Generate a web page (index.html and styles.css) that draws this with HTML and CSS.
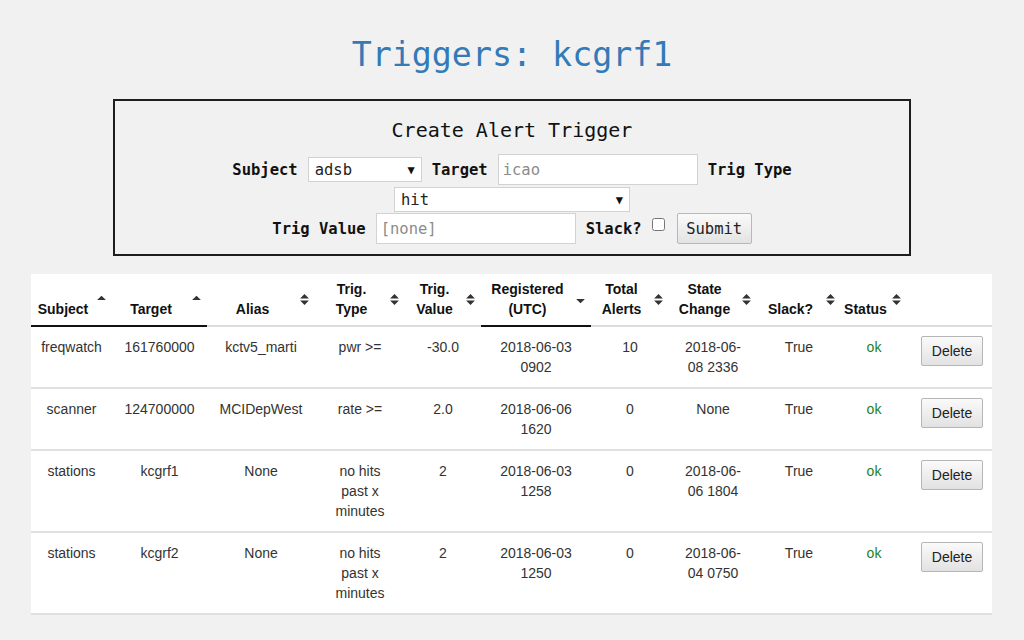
FILE: index.html
```html
<!DOCTYPE html>
<html lang="en">
<head>
<meta charset="utf-8">
<title>Triggers: kcgrf1</title>
<link rel="stylesheet" href="styles.css">
</head>
<body>
<h1 class="page-title">Triggers: kcgrf1</h1>

<form class="create-box">
  <h2 class="create-title">Create Alert Trigger</h2>
  <div class="form-row">
    <label class="lbl">Subject</label>
    <span class="sel-wrap sel-subject"><select class="sel"><option>adsb</option></select></span>
    <label class="lbl">Target</label>
    <input class="txt" type="text" placeholder="icao">
    <label class="lbl">Trig Type</label>
  </div>
  <div class="form-row row-type">
    <span class="sel-wrap sel-type"><select class="sel"><option>hit</option></select></span>
  </div>
  <div class="form-row">
    <label class="lbl">Trig Value</label>
    <input class="txt" type="text" placeholder="[none]">
    <label class="lbl">Slack?</label>
    <input class="chk" type="checkbox">
    <button class="submit-btn" type="button">Submit</button>
  </div>
</form>

<table class="triggers">
  <colgroup>
    <col style="width:81px"><col style="width:95px"><col style="width:108px"><col style="width:90px">
    <col style="width:76px"><col style="width:110px"><col style="width:78px"><col style="width:88px">
    <col style="width:84px"><col style="width:66px"><col style="width:85px">
  </colgroup>
  <thead>
    <tr>
      <th class="sorted">Subject<svg class="sort-icon" viewBox="0 0 8 10"><path d="M0 5.5 L4 1.5 L8 5.5 Z"/></svg></th>
      <th class="sorted">Target<svg class="sort-icon" viewBox="0 0 8 10"><path d="M0 5.5 L4 1.5 L8 5.5 Z"/></svg></th>
      <th>Alias<svg class="sort-icon" viewBox="0 0 8 10"><path d="M0 4 L4 0 L8 4 Z M0 6 L8 6 L4 10 Z"/></svg></th>
      <th>Trig.<br>Type<svg class="sort-icon" viewBox="0 0 8 10"><path d="M0 4 L4 0 L8 4 Z M0 6 L8 6 L4 10 Z"/></svg></th>
      <th>Trig.<br>Value<svg class="sort-icon" viewBox="0 0 8 10"><path d="M0 4 L4 0 L8 4 Z M0 6 L8 6 L4 10 Z"/></svg></th>
      <th class="sorted">Registered<br>(UTC)<svg class="sort-icon" viewBox="0 0 8 10"><path d="M0 4.5 L8 4.5 L4 8.5 Z"/></svg></th>
      <th>Total<br>Alerts<svg class="sort-icon" viewBox="0 0 8 10"><path d="M0 4 L4 0 L8 4 Z M0 6 L8 6 L4 10 Z"/></svg></th>
      <th>State<br>Change<svg class="sort-icon" viewBox="0 0 8 10"><path d="M0 4 L4 0 L8 4 Z M0 6 L8 6 L4 10 Z"/></svg></th>
      <th>Slack?<svg class="sort-icon" viewBox="0 0 8 10"><path d="M0 4 L4 0 L8 4 Z M0 6 L8 6 L4 10 Z"/></svg></th>
      <th>Status<svg class="sort-icon" viewBox="0 0 8 10"><path d="M0 4 L4 0 L8 4 Z M0 6 L8 6 L4 10 Z"/></svg></th>
      <th class="no-sort"></th>
    </tr>
  </thead>
  <tbody>
    <tr>
      <td>freqwatch</td><td>161760000</td><td>kctv5_marti</td><td>pwr &gt;=</td><td>-30.0</td>
      <td>2018-06-03 0902</td><td>10</td><td>2018-06-08 2336</td><td>True</td><td class="ok">ok</td>
      <td class="act"><button class="del-btn" type="button">Delete</button></td>
    </tr>
    <tr>
      <td>scanner</td><td>124700000</td><td>MCIDepWest</td><td>rate &gt;=</td><td>2.0</td>
      <td>2018-06-06 1620</td><td>0</td><td>None</td><td>True</td><td class="ok">ok</td>
      <td class="act"><button class="del-btn" type="button">Delete</button></td>
    </tr>
    <tr>
      <td>stations</td><td>kcgrf1</td><td>None</td><td>no hits past x minutes</td><td>2</td>
      <td>2018-06-03 1258</td><td>0</td><td>2018-06-06 1804</td><td>True</td><td class="ok">ok</td>
      <td class="act"><button class="del-btn" type="button">Delete</button></td>
    </tr>
    <tr>
      <td>stations</td><td>kcgrf2</td><td>None</td><td>no hits past x minutes</td><td>2</td>
      <td>2018-06-03 1250</td><td>0</td><td>2018-06-04 0750</td><td>True</td><td class="ok">ok</td>
      <td class="act"><button class="del-btn" type="button">Delete</button></td>
    </tr>
  </tbody>
</table>
</body>
</html>
```

FILE: styles.css
```css
html, body {
  margin: 0;
  padding: 0;
  background: #f1f1f1;
}

body {
  font-family: "DejaVu Sans Mono", "Liberation Mono", monospace;
  color: #222;
}

.page-title {
  margin: 35px 0 24px;
  font-family: "DejaVu Sans Mono", monospace;
  font-size: 33.3px;
  line-height: 40px;
  font-weight: normal;
  color: #337ab7;
  text-align: center;
}

.create-box {
  box-sizing: border-box;
  width: 798px;
  margin: 0 auto;
  border: 2px solid #1e1e1e;
  padding: 17px 0 10px;
  display: flex;
  flex-direction: column;
  align-items: center;
}

.create-title {
  margin: 0 0 12px;
  font-size: 20px;
  line-height: 24px;
  font-weight: normal;
  color: #111;
}

.form-row {
  display: flex;
  align-items: center;
  justify-content: center;
  gap: 10px;
  height: 31px;
}

.row-type {
  height: 25px;
  margin: 2px 0 1px;
}

.lbl {
  font-size: 15.5px;
  font-weight: bold;
  color: #111;
}

.sel-wrap {
  position: relative;
  display: block;
}

.sel-wrap::after {
  content: "\25BC";
  position: absolute;
  right: 7px;
  top: 50%;
  transform: translateY(-50%);
  font-size: 12px;
  color: #111;
  pointer-events: none;
}

.sel {
  -webkit-appearance: none;
  appearance: none;
  box-sizing: border-box;
  display: block;
  height: 25px;
  margin: 0;
  padding: 0 6px;
  border: 1px solid #d2d2d2;
  border-radius: 0;
  background: #fff;
  font-family: "DejaVu Sans Mono", monospace;
  font-size: 15.5px;
  color: #222;
}

.sel-subject .sel { width: 114px; }
.sel-type .sel { width: 236px; }

.txt {
  box-sizing: border-box;
  width: 200px;
  height: 31px;
  margin: 0;
  padding: 0 4px;
  border: 1px solid #d2d2d2;
  background: #fff;
  font-family: "DejaVu Sans Mono", monospace;
  font-size: 15.5px;
  color: #222;
}

.txt::placeholder {
  color: #8c8c8c;
}

.chk {
  width: 13px;
  height: 13px;
  margin: 5px 2px 0 0;
  align-self: flex-start;
}

.submit-btn {
  box-sizing: border-box;
  width: 75px;
  height: 31px;
  margin: 0;
  padding: 0;
  border: 1px solid #b8b8b8;
  border-radius: 2px;
  background: linear-gradient(#fafafa, #e3e3e3);
  font-family: "DejaVu Sans Mono", monospace;
  font-size: 15.5px;
  color: #222;
}

.triggers {
  width: 961px;
  margin: 18px 0 0 31px;
  table-layout: fixed;
  border-collapse: collapse;
  background: #fff;
  font-family: "Liberation Sans", Arial, sans-serif;
  font-size: 14px;
  line-height: 20px;
}

.triggers th {
  position: relative;
  padding: 5px 20px 6px 3px;
  vertical-align: bottom;
  text-align: center;
  font-weight: bold;
  color: #111;
  border-bottom: 2px solid #dcdcdc;
}

.triggers th.sorted {
  border-bottom-color: #111;
}

.sort-icon {
  position: absolute;
  right: 6px;
  top: 50%;
  width: 9px;
  height: 11px;
  margin-top: -6px;
  fill: #333;
}

.triggers td {
  padding: 10px;
  vertical-align: top;
  text-align: center;
  color: #333;
  border-bottom: 2px solid #e0e0e0;
}

.triggers td.ok {
  color: #1f7f1f;
}

.triggers td.act {
  padding: 9px 9px 10px 0;
  text-align: right;
}

.del-btn {
  box-sizing: border-box;
  width: 62px;
  height: 30px;
  margin: 0;
  padding: 0;
  border: 1px solid #b5b5b5;
  border-radius: 2px;
  background: linear-gradient(#fafafa, #e2e2e2);
  font-family: "Liberation Sans", Arial, sans-serif;
  font-size: 14px;
  color: #222;
  vertical-align: top;
}
```
